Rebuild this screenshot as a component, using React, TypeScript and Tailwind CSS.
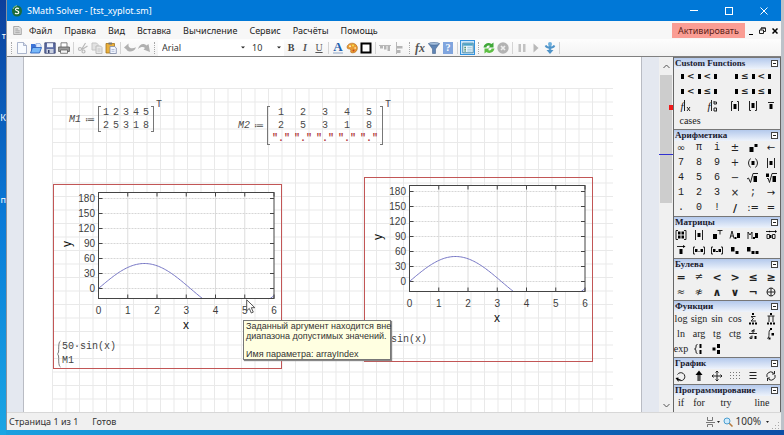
import React from 'react';

const menus = ['Файл', 'Правка', 'Вид', 'Вставка', 'Вычисление', 'Сервис', 'Расчёты', 'Помощь'];

/* ---------- toolbar ---------- */

const Svg = ({ children, size = 12 }: { children: React.ReactNode; size?: number }) => (
  <svg width={size} height={size} viewBox="0 0 12 12" fill="none" aria-hidden="true">
    {children}
  </svg>
);

const ToolButton = ({ title, children }: { title: string; children: React.ReactNode }) => (
  <button title={title} aria-label={title} className="flex h-4 w-[14px] shrink-0 items-center justify-center">
    {children}
  </button>
);

const Separator = () => <div className="mx-[2px] h-3 w-px shrink-0 bg-[#d4d4d4]" />;

const Grip = () => <div className="mx-[3px] h-3 w-px shrink-0 border-l border-dotted border-[#a8a8a8]" />;

const icons = {
  app: (
    <Svg>
      <ellipse cx="6" cy="6" rx="5" ry="5.6" fill="#1d6b3a" />
      <path d="M2 4a5 5 0 0 1 4-3.4" stroke="#8cc79f" />
      <path d="M7.8 3.8C7 2.8 4.400 3 4.500 4.500c.1 1.600 3.300 1 3.300 2.800 0 1.700-2.700 1.900-3.700.7" stroke="#fff" strokeWidth="1.200" />
    </Svg>
  ),
  sheet: (
    <Svg size={9}>
      <path d="M1 .5h7l3 3v8H1z" fill="#e4e4e4" stroke="#8a8a8a" />
      <path d="M3 4h4M3 6.500h6M3 9h6" stroke="#8a8a8a" />
    </Svg>
  ),
  create: (
    <Svg>
      <path d="M1.500.5h6l3 3v8h-9z" fill="#f8fbff" stroke="#98a4c0" strokeWidth=".8" />
      <path d="M7.500.5v3h3" fill="#d5dcec" stroke="#98a4c0" strokeWidth=".8" />
    </Svg>
  ),
  open: (
    <Svg>
      <path d="M1 2h4l1 1h4v7H1z" fill="#3c74d8" />
      <path d="M6 1.500h4l1 2v3H6z" fill="#dce9ff" stroke="#7d9ad0" strokeWidth=".6" />
      <path d="M.5 11 2.500 5.500h9L9.500 11z" fill="#78b8f8" stroke="#2458b8" strokeWidth=".8" />
    </Svg>
  ),
  save: (
    <Svg>
      <path d="M.8.8h10.400v10.400H.8z" fill="#5f6fa6" stroke="#36406c" strokeWidth=".8" />
      <path d="M3 1.200h6v4H3z" fill="#eef2fb" />
      <path d="M2.500 7h7v4h-7z" fill="#c8cfdf" />
      <path d="M4 8h1.500v3H4z" fill="#36406c" />
    </Svg>
  ),
  print: (
    <Svg>
      <path d="M3 5V.8h6V5" fill="#fff" stroke="#666" strokeWidth=".8" />
      <path d="M.6 5h10.800v4.500H.6z" fill="#9b9b9b" stroke="#555" strokeWidth=".8" />
      <path d="M2.500 8h7v3.300h-7z" fill="#f4f4f4" stroke="#555" strokeWidth=".7" />
    </Svg>
  ),
  cut: (
    <Svg>
      <path d="M8.500 1 4.500 7.500M10.500 4 5 7.500" stroke="#b9b9b9" strokeWidth="1.200" />
      <circle cx="3" cy="7" r="1.500" stroke="#b9b9b9" strokeWidth="1.200" />
      <circle cx="6.500" cy="9.500" r="1.500" stroke="#b9b9b9" strokeWidth="1.200" />
    </Svg>
  ),
  copy: (
    <Svg>
      <path d="M1 1h4.500l1.500 1.500V8H1z" fill="#e2e2e2" stroke="#c4c4c4" />
      <path d="M5 4h4.500L11 5.500v6H5z" fill="#e9e9e9" stroke="#bdbdbd" />
      <path d="M6.500 7h3M6.500 9h3" stroke="#c4c4c4" />
    </Svg>
  ),
  paste: (
    <Svg>
      <path d="M1 1.500h8.500v9.500H1z" fill="#eab03c" stroke="#a4731c" strokeWidth=".8" />
      <path d="M3.500.5h3.500v2H3.500z" fill="#777" />
      <path d="M5 4.500h4.500L11.300 6v5.500H5z" fill="#f2f6ff" stroke="#7f8cab" strokeWidth=".8" />
      <path d="M6.500 7.500h3M6.500 9.300h3" stroke="#9aa8c8" strokeWidth=".7" />
    </Svg>
  ),
  undo: (
    <Svg>
      <path d="M0 5.500 4.500 1.500v2.500c1 2.500 4 3 7.500 1.300-1.500 5-8 5.500-9.500 2.200z" fill="#b0b0b0" />
    </Svg>
  ),
  redo: (
    <Svg>
      <path d="M0 7C1.500 1.500 6 .8 8.500 3.500L10.500 2l1.500 8-6.500-2.500L7 6C5.500 4.500 3 4.500 0 7z" fill="#b0b0b0" />
    </Svg>
  ),
  palette: (
    <Svg>
      <path d="M1 5C1.500 2 5 .5 8 1.500c3 1 4 4 3 6.500s-4 3.500-6 2.500c-1.200-.7.5-2-.5-3S1 7.500 1 5z" fill="#e99a34" stroke="#b06a18" strokeWidth=".6" />
      <circle cx="4" cy="4.300" r="1" fill="#fff3c4" />
      <circle cx="7" cy="3.600" r="1" fill="#f5e04a" />
      <circle cx="9.200" cy="6" r="1" fill="#fbd98e" />
      <circle cx="7.500" cy="8.500" r="1" fill="#c5461e" />
    </Svg>
  ),
  frame: (
    <Svg>
      <path d="M1.500 1.500h9v9h-9z" stroke="#000" strokeWidth="2" fill="#fff" />
    </Svg>
  ),
  alignTop: (
    <Svg>
      <path d="M0 3.500h12" stroke="#b8b8b8" />
      <path d="M1 4h3v2.500H1zM5 4h2.500v3.500H5zM8.500 4h2.500v5H8.500z" fill="#b5b5b5" />
    </Svg>
  ),
  alignLeft: (
    <Svg>
      <path d="M3.500 0v12" stroke="#b8b8b8" />
      <path d="M4 4h5.500v2.500H4zM4 8h3.500v3H4z" fill="#b5b5b5" />
    </Svg>
  ),
  filter: (
    <Svg>
      <path d="M.5 1.500h11L7.500 7v4.500h-3V7z" fill="#5f84b4" stroke="#45658f" strokeWidth=".6" />
      <ellipse cx="6" cy="1.800" rx="5.300" ry="1.300" fill="#a9c4e2" stroke="#45658f" strokeWidth=".6" />
    </Svg>
  ),
  debug: (
    <Svg>
      <path d="M6 3v6" stroke="#5a9fd2" strokeWidth="2.500" />
      <circle cx="6" cy="2" r="2" fill="#6fb0dd" />
      <path d="M1.500 3.500C3 6.500 9 6.500 10.500 3.500" stroke="#4f93c8" strokeWidth="1.800" />
      <path d="M2.500 8h7L6 12z" fill="#4f93c8" />
    </Svg>
  ),
  panel: (
    <Svg>
      <path d="M.8 1.200h10.400v9.600H.8z" fill="#eef7fd" stroke="#3c7f9e" strokeWidth=".9" />
      <path d="M1.200 1.500h9.600v2.200H1.200z" fill="#4ba3c7" />
      <path d="M2.300 5.300h1.700M2.300 7.200h1.700M2.300 9h1.700" stroke="#2f7a52" />
      <path d="M5.300 5.300h4.500M5.300 7.200h4.500M5.300 9h4.500" stroke="#86b9d0" strokeWidth=".8" />
    </Svg>
  ),
  refresh: (
    <Svg>
      <path d="M.5 5.500C1 1.500 5.500 0 8.500 2L10.500.5V5.500H5.500L7 4C5 3 3.500 4 3.500 5.500z" fill="#3fa838" />
      <path d="M11.500 6.500c-.5 4-5 5.500-8 3.500L1.500 11.500V6.500h5L5 8c2 1 3.500 0 3.500-1.500z" fill="#5dbf43" />
    </Svg>
  ),
  stop: (
    <Svg>
      <circle cx="6" cy="6" r="5.700" fill="#b3b3b3" />
      <path d="m4 4 4 4M8 4 4 8" stroke="#ededed" strokeWidth="1.700" />
    </Svg>
  ),
  pause: (
    <Svg>
      <path d="M2.500 2H5v8H2.500zM7 2h2.500v8H7z" fill="#c2c2c2" />
    </Svg>
  ),
  play: (
    <Svg>
      <path d="m3.500 1.500 5 4.500-5 4.500z" fill="#b8b8b8" />
    </Svg>
  ),
};

const Toolbar = () => (
  <div className="flex h-[17px] items-center bg-gradient-to-b from-[#fdfdfd] to-[#f3f3f3] pl-[1px]">
    <Grip />
    <ToolButton title="Создать">{icons.create}</ToolButton>
    <ToolButton title="Открыть">{icons.open}</ToolButton>
    <ToolButton title="Сохранить">{icons.save}</ToolButton>
    <ToolButton title="Печать">{icons.print}</ToolButton>
    <Separator />
    <ToolButton title="Вырезать">{icons.cut}</ToolButton>
    <ToolButton title="Копировать">{icons.copy}</ToolButton>
    <ToolButton title="Вставить">{icons.paste}</ToolButton>
    <Separator />
    <ToolButton title="Отменить">{icons.undo}</ToolButton>
    <ToolButton title="Повторить">{icons.redo}</ToolButton>
    <Grip />
    <Combo label="Шрифт" value="Arial" className="w-[90px]" />
    <Combo label="Размер" value="10" className="w-9" />
    <ToolButton title="Полужирный">
      <span className="font-[Liberation_Serif,serif] text-[10px] font-bold text-[#444]">B</span>
    </ToolButton>
    <ToolButton title="Курсив">
      <span className="font-[Liberation_Serif,serif] text-[10px] font-bold italic text-[#555]">I</span>
    </ToolButton>
    <ToolButton title="Подчёркнутый">
      <span className="font-[Liberation_Serif,serif] text-[10px] text-[#555] underline">U</span>
    </ToolButton>
    <Separator />
    <ToolButton title="Цвет текста">
      <span className="border-b-2 border-[#c3cede] font-[Liberation_Serif,serif] text-[13px] font-bold leading-[11px] text-[#2360ae]">
        A
      </span>
    </ToolButton>
    <ToolButton title="Цвет фона">{icons.palette}</ToolButton>
    <ToolButton title="Граница">{icons.frame}</ToolButton>
    <Separator />
    <ToolButton title="По верхнему краю">{icons.alignTop}</ToolButton>
    <ToolButton title="По левому краю">{icons.alignLeft}</ToolButton>
    <Grip />
    <ToolButton title="Функция">
      <span className="font-[Liberation_Serif,serif] text-[12px] font-bold italic leading-none text-[#555]">fx</span>
    </ToolButton>
    <ToolButton title="Единицы">{icons.filter}</ToolButton>
    <ToolButton title="Справочник">
      <span className="flex h-3 w-[10px] items-center justify-center bg-[#80a5de] font-[Liberation_Serif,serif] text-[10px] font-bold text-white">
        ?
      </span>
    </ToolButton>
    <Separator />
    <button
      title="Боковая панель"
      aria-label="Боковая панель"
      className="flex h-[15px] w-[15px] shrink-0 items-center justify-center border border-[#3393df] bg-[#cce6fa]"
    >
      {icons.panel}
    </button>
    <Grip />
    <ToolButton title="Пересчитать">{icons.refresh}</ToolButton>
    <ToolButton title="Прервать">{icons.stop}</ToolButton>
    <Separator />
    <ToolButton title="Пауза">{icons.pause}</ToolButton>
    <ToolButton title="Продолжить">{icons.play}</ToolButton>
    <ToolButton title="Отладка">{icons.debug}</ToolButton>
    <Separator />
  </div>
);

const Combo = ({ label, value, className }: { label: string; value: string; className: string }) => (
  <div className={`flex h-4 shrink-0 items-center bg-white pr-[3px] ${className}`}>
    <select
      aria-label={label}
      defaultValue={value}
      className="h-4 min-w-0 flex-1 appearance-none bg-transparent pl-1 text-[9px] leading-[14px] text-[#333] outline-none"
    >
      <option>{value}</option>
    </select>
    <svg width="4" height="3" viewBox="0 0 4 3" aria-hidden="true">
      <path d="M0 .5h4L2 2.500z" fill="#222" />
    </svg>
  </div>
);

/* ---------- worksheet ---------- */

const STEP_X = 29.25;
const STEP_Y = 15;
const LEFT = 44.5;
const RIGHT = 220;
const TOP = 7.5;
const BOTTOM = 113.5;
const ZERO = 103.5;

const curve = Array.from({ length: 121 }, (_, i) => {
  const x = i / 20;
  const y = ZERO - (50 * Math.sin(x) * STEP_Y) / 30;
  return `${i ? 'L' : 'M'}${(LEFT + x * STEP_X).toFixed(2)} ${y.toFixed(2)}`;
}).join('');

const Plot = ({ id }: { id: string }) => (
  <svg width="227" height="150" viewBox="0 0 227 150" className="block font-[Liberation_Sans,sans-serif]">
    <clipPath id={id}>
      <rect x={LEFT} y={TOP} width={RIGHT - LEFT} height={BOTTOM - TOP} />
    </clipPath>
    <rect x={LEFT} y={TOP} width={RIGHT - LEFT} height={BOTTOM - TOP} fill="#fff" />
    {[1, 2, 3, 4, 5].map((n) => (
      <line key={n} x1={LEFT + n * STEP_X} x2={LEFT + n * STEP_X} y1={TOP} y2={BOTTOM} stroke="#dcdcdc" />
    ))}
    {[0, 1, 2, 3, 4, 5, 6].map((n) => (
      <g key={n}>
        <line x1={LEFT} x2={RIGHT} y1={ZERO - n * STEP_Y} y2={ZERO - n * STEP_Y} stroke="#d6d6d6" strokeDasharray="2 1" />
        <path
          d={`M${LEFT} ${ZERO - n * STEP_Y}h4M${RIGHT - 4} ${ZERO - n * STEP_Y}h4`}
          stroke="#444"
        />
        <path d={`M${LEFT + n * STEP_X} ${TOP}v4M${LEFT + n * STEP_X} ${BOTTOM - 4}v4`} stroke="#444" />
        <text x={41} y={ZERO - n * STEP_Y + 3} textAnchor="end" fontSize="10" fill="#3c3c3c">
          {n * 30}
        </text>
        <text x={LEFT + n * STEP_X} y={129} textAnchor="middle" fontSize="10" fill="#3c3c3c">
          {n}
        </text>
      </g>
    ))}
    <path d={curve} clipPath={`url(#${id})`} stroke="#7676c4" fill="none" />
    <rect x={LEFT} y={TOP} width={RIGHT - LEFT} height={BOTTOM - TOP} fill="none" stroke="#444" />
    <text x={132} y={144} textAnchor="middle" fontSize="12" fill="#111">
      x
    </text>
    <text transform="translate(17 59) rotate(-90)" textAnchor="middle" fontSize="12" fill="#111">
      y
    </text>
  </svg>
);

const PlotRegion = ({ id, className }: { id: string; className: string }) => (
  <div className={`absolute w-[229px] border border-[#c25656] ${className}`}>
    <Plot id={id} />
    <div className="mt-[5px] flex items-center gap-px pl-[3px] font-[Liberation_Mono,monospace] text-[10px] leading-[14px] text-[#444]">
      <svg width="4" height="28" viewBox="0 0 4 28" fill="none" stroke="#777" aria-hidden="true">
        <path d="M3.500 1C1 2 2 10 1.500 12 1 14 .5 14 .5 14s.5 0 1 2C2 18 1 26 3.500 27" />
      </svg>
      <div>
        <div>50·sin(x)</div>
        <div>M1</div>
      </div>
    </div>
  </div>
);

const Matrix = ({ name, rows, className, cell }: { name: string; rows: string[][]; className: string; cell: string }) => (
  <div className={`absolute flex items-center font-[Liberation_Mono,monospace] text-[10px] text-[#4a4a4a] ${className}`}>
    <span className="italic">{name}</span>
    <span className="ml-1 mr-[3px] font-[DejaVu_Sans,sans-serif]">≔</span>
    <div className="w-[3px] self-stretch border-y border-l border-[#777]" />
    <div className="grid grid-cols-5">
      {rows.flat().map((value, i) => (
        <span
          key={i}
          className={`text-center leading-[13px] ${cell} ${value === '"."' ? 'font-bold text-[#b03c3c]' : ''}`}
        >
          {value}
        </span>
      ))}
    </div>
    <div className="w-[3px] self-stretch border-y border-r border-[#777]" />
    <sup className="top-0 -mt-[6px] ml-[2px] self-start text-[10px] leading-none">T</sup>
  </div>
);

const Worksheet = () => (
  <main className="flex min-w-0 flex-1 bg-[#e4e8f0] pl-4 pr-[17px]">
    <div className="relative min-w-0 flex-1 overflow-hidden border-x border-[#b9bcc4] bg-white pl-7 pr-7 pt-[31px]">
      <svg width="100%" height="100%" className="block" aria-hidden="true">
        <defs>
          <pattern id="paper" width="27" height="27" patternUnits="userSpaceOnUse">
            <path d="M.5 0v27M14 0v27M0 .5h27M0 14h27" stroke="#e9e9e9" fill="none" />
          </pattern>
        </defs>
        <rect width="100%" height="100%" fill="url(#paper)" />
      </svg>

      <Matrix
        name="M1"
        rows={[
          ['1', '2', '3', '4', '5'],
          ['2', '5', '3', '1', '8'],
        ]}
        cell="w-[10px]"
        className="left-[45px] top-[49px]"
      />
      <Matrix
        name="M2"
        rows={[
          ['1', '2', '3', '4', '5'],
          ['2', '5', '3', '1', '8'],
          ['"."', '"."', '"."', '"."', '"."'],
        ]}
        cell="w-[22px]"
        className="left-[214px] top-[49px]"
      />

      <PlotRegion id="plot-a" className="left-[29px] top-[127px]" />
      <PlotRegion id="plot-b" className="left-[340px] top-[120px]" />

      <div
        role="tooltip"
        className="absolute left-[219px] top-[263px] w-[148px] whitespace-nowrap border border-[#777] bg-[#ffffe1] px-[2px] font-[Liberation_Sans,sans-serif] text-[9px] leading-[10px] text-[#333] shadow-[1px_1px_1px_#888]"
      >
        <p>Заданный аргумент находится вне</p>
        <p>диапазона допустимых значений.</p>
        <p className="mt-2">Имя параметра: arrayIndex</p>
      </div>
      <svg width="10" height="15" viewBox="0 0 10 15" className="absolute left-[222px] top-[242px]" aria-hidden="true">
        <path d="M.7.8v11l2.600-2.400 2 4.600 2-.9-2-4.400h3.500z" fill="#fff" stroke="#444" strokeWidth=".9" />
      </svg>
    </div>
  </main>
);

const Scroller = () => (
  <div className="flex w-[14px] shrink-0 flex-col bg-[#f0f0f0]">
    <button aria-label="Вверх" className="flex h-[18px] items-center justify-center">
      <svg width="7" height="5" viewBox="0 0 7 5" fill="none" stroke="#555">
        <path d="M.5 4 3.500 1l3 3" />
      </svg>
    </button>
    <div className="relative flex-1">
      <div className="mx-px h-32 bg-[#cdcdcd]" />
      <div className="absolute right-0 top-[30px] h-[5px] w-1 bg-[#f01818]" />
      <div className="absolute inset-x-0 top-[79px] h-px bg-[#3030d0]" />
    </div>
    <button aria-label="Вниз" className="flex h-[14px] items-center justify-center">
      <svg width="7" height="5" viewBox="0 0 7 5" fill="none" stroke="#555">
        <path d="m.5 1 3 3 3-3" />
      </svg>
    </button>
  </div>
);

/* ---------- side panels ---------- */

type Item = { name: string; view?: React.ReactNode; span?: string };

const Slot = () => <span className="inline-block h-[5px] w-[3px] shrink-0 bg-black" />;

const Range = ({ a, b }: { a: string; b: string }) => (
  <span className="flex items-center gap-[3px] font-[DejaVu_Sans,sans-serif] text-[9px] font-bold">
    <Slot />
    {a}
    <Slot />
    {b}
    <Slot />
  </span>
);

const Mono = ({ children }: { children: React.ReactNode }) => (
  <span className="font-[Liberation_Mono,monospace] text-[10px]">{children}</span>
);

const Sym = ({ children }: { children: React.ReactNode }) => (
  <span className="font-[DejaVu_Sans,sans-serif] text-[10px]">{children}</span>
);

const BoldSym = ({ children }: { children: React.ReactNode }) => (
  <span className="font-[DejaVu_Sans,sans-serif] text-[11px] font-bold">{children}</span>
);

// small operator drawing: strokes plus filled slots
const Op = ({ line, fill, w = 12 }: { line?: string; fill?: string; w?: number }) => (
  <svg width={w} height="12" viewBox={`0 0 ${w} 12`} fill="none" aria-hidden="true">
    {line && <path d={line} stroke="#222" />}
    {fill && <path d={fill} fill="#000" />}
  </svg>
);

const mono = (s: string): Item => ({ name: s, view: <Mono>{s}</Mono> });
const sym = (s: string): Item => ({ name: s, view: <Sym>{s}</Sym> });
const bold = (s: string): Item => ({ name: s, view: <BoldSym>{s}</BoldSym> });

const panels: { title: string; items: Item[] }[] = [
  {
    title: 'Custom Functions',
    items: [
      { name: 'a<x<b', view: <Range a="<" b="<" />, span: 'col-span-6' },
      { name: 'a≤x<b', view: <Range a="≤" b="<" />, span: 'col-span-6' },
      { name: 'a<x≤b', view: <Range a="<" b="≤" />, span: 'col-span-6' },
      { name: 'a≤x≤b', view: <Range a="≤" b="≤" />, span: 'col-span-6' },
      {
        name: 'f|x',
        view: (
          <span className="flex items-end text-[11px] italic">
            f<Op w={7} line="M.5 0v11M3 7l3 4M6 7l-3 4" />
          </span>
        ),
        span: 'col-span-3',
      },
      {
        name: 'f|ab',
        view: (
          <span className="flex items-end text-[11px] italic">
            f<Op w={7} line="M.5 0v11M3 1v3h2.500v-2H3M5.500 11V8H3v3h3" />
          </span>
        ),
        span: 'col-span-3',
      },
      { name: 'ceil', view: <Op line="M4 1.500H2.500V11M8 1.500h1.500V11" fill="M4.500 4h3v5h-3z" /> },
      { name: 'floor', view: <Op line="M4 10.500H2.500V1M8 10.500h1.500V1" fill="M4.500 3h3v5h-3z" /> },
      { name: 'mean', view: <Op line="M3 2.500h6" fill="M4.500 4h3v5h-3z" /> },
      { name: 'cases', span: 'col-span-4' },
    ],
  },
  {
    title: 'Арифметика',
    items: [
      sym('∞'), mono('π'), mono('i'), sym('±'),
      { name: 'x^y', view: <Op fill="M2.500 5h4v5h-4zM7.500 2h3v3h-3z" /> },
      sym('←'),
      mono('7'), mono('8'), mono('9'), sym('+'),
      { name: '(x)', view: <Op line="M3.500 1.500q-4 4.500 0 9M8.500 1.500q4 4.500 0 9" fill="M4.500 4h3v4h-3z" /> },
      { name: '|x|', view: <Op line="M2.500 1v10M9.500 1v10" fill="M4.500 4h3v4h-3z" /> },
      mono('4'), mono('5'), mono('6'), sym('−'),
      { name: 'sqrt', view: <Op line="M0 7l1.500-1 2 4.500L6 1.500h5" fill="M6.500 4h3.500v6H6.500z" /> },
      { name: 'root', view: <Op line="M2 7l1-1 1.500 4.500L7 1.500h5" fill="M7.500 4H11v6H7.500zM1 1.500h3v3.500H1z" /> },
      mono('1'), mono('2'), mono('3'), sym('×'), mono(';'), sym('→'),
      mono('.'), mono('0'), mono('!'), bold('/'), sym(':='), sym('='),
    ],
  },
  {
    title: 'Матрицы',
    items: [
      { name: 'matrix', view: <Op line="M3 1.500H1V10.500H3M9 1.500h2v9H9" fill="M3 2.500h2.500V5.500H3zM6.500 2.500H9V5.500H6.500zM3 6.500h2.500V9.500H3zM6.500 6.500H9V9.500H6.500z" /> },
      { name: 'det', view: <Op line="M2.500 1v10M9.500 1v10" fill="M4.500 4h3v4h-3z" /> },
      { name: 'transpose', view: <Op line="M6.500 1.500h5M9 1.500v4" fill="M2 5h4v5H2z" /> },
      { name: 'minor', view: <Op line="M1 9.500 3 2l2 7.500M1.500 7h3" fill="M5.500 8h2v2h-2zM8 4h3v5H8z" /> },
      { name: 'algebraic', view: <Op line="M1 10V3l2 3 2-3v7" fill="M6 8h2v2H6zM8 4h3v5H8z" /> },
      { name: 'cross', view: <Op line="M1 2.500h10M2 5.500h2.500v4H2zM7.500 5.500H10v4H7.500z" fill="M5 6h1.500v3H5zM4 1.500l1.500 1L4 3.500zM10 1l2 1.500L10 4z" /> },
      { name: 'vectorize', view: <Op line="M2 2.500h7" fill="M8 1l2.500 1.500L8 4zM4.500 5h3v5h-3z" /> },
      { name: '[x..y]', view: <Op line="M2 3H.5v7H2M10 3h1.500v7H10" fill="M2 5h2.500v3H2zM7.500 5H10v3H7.500zM5.500 7h1v1h-1z" /> },
      { name: '[x..y)', view: <Op line="M2 3H.5v7H2M10 3h1.500v7H10" fill="M2 5h2.500v3H2zM7.500 5H10v3H7.500zM5 7h2v1H5z" /> },
      { name: 'element', view: <Op fill="M2 3h3.500v4.500H2zM6.500 7h3v3h-3z" /> },
      { name: 'element 2', view: <Op fill="M0 3h3.500v4.500H0zM4.500 7h3v3h-3zM8.500 7h3v3h-3z" /> },
    ],
  },
  {
    title: 'Булева',
    items: [
      bold('='), sym('≠'), bold('<'), bold('>'), bold('≤'), bold('≥'),
      sym('≈'), sym('≉'), bold('∧'), bold('∨'), bold('¬'),
      { name: 'xor', view: <Op line="M6 2a4 4 0 1 0 .01 0M6 2v8M2 6h8" /> },
    ],
  },
  {
    title: 'Функции',
    items: [
      { name: 'log' }, { name: 'sign' }, { name: 'sin' }, { name: 'cos' },
      { name: 'sum', view: <Op line="M8.500 3.500H4L6.500 5.500 4 8h5" fill="M5 0h2v2H5zM2 9.500h2v2H2zM5 9.500h2v2H5zM8 9.500h2v2H8z" /> },
      { name: 'product', view: <Op line="M2.500 3h7M4 3v6M8 3v6" fill="M5 0h2v2H5zM2 9.500h2v2H2zM5 9.500h2v2H5zM8 9.500h2v2H8z" /> },
      { name: 'ln' }, { name: 'arg' }, { name: 'tg' }, { name: 'ctg' },
      { name: 'd/dx', view: <Op line="M2 5.500h8M7 1v3H5V2.500h2M5 7.500v3H3V9h2" fill="M7.500 8h2v3h-2z" /> },
      { name: 'integral', view: <Op line="M6 2C4.500 1 4 3 4 6s-.5 5-2 4" fill="M5 0h2v2H5zM6.500 5H9v2.500H6.500zM3.500 9.500h2v2h-2z" /> },
      { name: 'exp' },
      { name: 'system', view: <Op line="M4.500 1.500Q2.500 1.500 3 4 3 6 1.500 6 3 6 3 8q-.5 2.500 1.500 2.500" fill="M6.500 1H8.500v4H6.500zM6.500 7H8.500v4H6.500z" /> },
      { name: 'line', view: <Op fill="M1.500 4.500h3v3h-3zM6 1h3v4H6zM6 7h3v4H6z" /> },
    ],
  },
  {
    title: 'График',
    items: [
      { name: 'rotate', view: <Op line="M3 9.500A4 4 0 1 0 2.500 4.500M5.500 9.500H2" fill="M.5 8l3-.5V12z" /> },
      { name: 'scale', view: <Op line="M6 4v7M5 4v7M7 4v7" fill="M6 .5 9.500 5h-7z" /> },
      { name: 'move', view: <Op line="M6 1v10M1 6h10M4.500 2.500 6 1l1.500 1.500M4.500 9.500 6 11l1.500-1.500M2.500 4.500 1 6l1.500 1.500M9.500 4.500 11 6 9.500 7.500" /> },
      {
        name: 'points',
        view: (
          <svg width="10" height="8" viewBox="0 0 10 8" stroke="#777" strokeDasharray="1 2" aria-hidden="true">
            <path d="M0 .5h10M0 3.500h10M0 6.500h10" />
          </svg>
        ),
      },
      { name: 'lines', view: <Op line="M2.500 2.500h7M2.500 5.500h7M2.500 8.500h7" /> },
      { name: 'refresh', view: <Op line="M2 7A4 4 0 0 1 8 2.500L9.500 4M10 5A4 4 0 0 1 4 9.500L2.500 8M9.500 1v3H7M2.500 11V8H5" /> },
    ],
  },
  {
    title: 'Программирование',
    items: [
      { name: 'if' }, { name: 'for' },
      { name: 'try', span: 'col-span-4' },
      { name: 'line', span: 'col-span-4' },
    ],
  },
];

const SidePanels = () => (
  <aside className="w-[108px] shrink-0 border-x border-[#666] bg-[#f0f0f0] font-[Liberation_Serif,serif]">
    {panels.map((panel) => (
      <section key={panel.title}>
        <h2 className="flex h-3 items-center justify-between border-t border-[#777] bg-gradient-to-b from-[#b4c9ec] to-[#eef3fb] pl-px pr-[2px] text-[9px] font-bold leading-none text-[#1a1a2e]">
          {panel.title}
          <button
            aria-label={`Свернуть ${panel.title}`}
            className="flex h-[7px] w-[7px] items-center justify-center border border-[#444] bg-white"
          >
            <span className="h-px w-[3px] bg-[#222]" />
          </button>
        </h2>
        <div className="-ml-[2px] grid grid-cols-12">
          {panel.items.map((item) => (
            <button
              key={item.name}
              aria-label={item.name}
              className={`flex h-[15px] min-w-0 items-center justify-center whitespace-nowrap pb-px text-[10px] leading-none text-[#222] ${item.span ?? 'col-span-2'}`}
            >
              {item.view ?? item.name}
            </button>
          ))}
        </div>
      </section>
    ))}
  </aside>
);

/* ---------- window ---------- */

const TitleBar = () => (
  <header className="flex h-[21px] items-center bg-[#0078d7] pl-1 text-white">
    {icons.app}
    <h1 className="ml-1 flex-1 text-[9px]">SMath Solver - [tst_xyplot.sm]</h1>
    <button aria-label="Свернуть" className="flex h-full w-[35px] items-center justify-center">
      <span className="h-px w-2 bg-white" />
    </button>
    <button aria-label="Развернуть" className="flex h-full w-[35px] items-center justify-center">
      <span className="h-2 w-2 border border-white" />
    </button>
    <button aria-label="Закрыть" className="flex h-full w-[35px] items-center justify-center">
      <svg width="8" height="8" viewBox="0 0 8 8" stroke="#fff">
        <path d="m.5.5 7 7M7.500.5l-7 7" />
      </svg>
    </button>
  </header>
);

const MenuBar = () => (
  <nav className="flex h-[18px] items-center bg-[#f7f7f7] pl-[6px] pt-px text-[#222]">
    {icons.sheet}
    <div className="ml-[7px] flex flex-1 gap-3 text-[9px]">
      {menus.map((menu) => (
        <button key={menu}>{menu}</button>
      ))}
    </div>
    <button className="h-[15px] w-[73px] bg-[#fa9d94] text-[9px] text-[#5a1d18]">Активировать</button>
    <div className="flex w-9 items-center justify-between pl-1 pr-[3px]">
      <button aria-label="Свернуть документ" className="flex h-2 w-1 items-end">
        <span className="h-px w-1 bg-black" />
      </button>
      <button aria-label="Восстановить документ">
        <svg width="7" height="7" viewBox="0 0 7 7" fill="none" stroke="#222">
          <path d="M.5 3h4v3.500h-4zM2 3V1h4.500v3.500h-2M2 1h4.500" />
        </svg>
      </button>
      <button aria-label="Закрыть документ">
        <svg width="6" height="6" viewBox="0 0 6 6" stroke="#000" strokeWidth="1.500">
          <path d="m.5.5 5 5M5.500.5l-5 5" />
        </svg>
      </button>
    </div>
  </nav>
);

const StatusBar = () => (
  <footer className="flex h-[18px] items-center border-t border-[#d7d7d7] bg-[#f0f0f0] pl-[2px] text-[9px] text-[#333]">
    <span>Страница 1 из 1</span>
    <span className="ml-[14px] flex-1">Готов</span>
    <button aria-label="Вид страницы" className="flex items-center gap-[2px]">
      <svg width="9" height="10" viewBox="0 0 9 10" fill="none" stroke="#777">
        <path d="M1.500 0v3.500h5V0M0 5.500h9M1.500 10V7.500h5V10" />
      </svg>
      <svg width="3" height="2" viewBox="0 0 3 2">
        <path d="M0 0h3L1.500 2z" fill="#222" />
      </svg>
    </button>
    <button className="ml-[3px] flex items-center text-[10px]">
      <svg width="10" height="10" viewBox="0 0 10 10" fill="none" className="mr-[3px]" aria-hidden="true">
        <path d="m6 6 3.500 3.500" stroke="#b5793c" strokeWidth="1.500" />
        <circle cx="4" cy="4" r="3" fill="#cfeafb" stroke="#4c9fd0" />
      </svg>
      100%
      <svg width="3" height="2" viewBox="0 0 3 2" className="ml-[5px]">
        <path d="M0 0h3L1.500 2z" fill="#222" />
      </svg>
    </button>
    <svg width="8" height="8" viewBox="0 0 8 8" fill="#aaa" className="ml-[3px] mr-px self-end" aria-hidden="true">
      <path d="M6 0h1v1H6zM3 3h1v1H3zM6 3h1v1H6zM0 6h1v1H0zM3 6h1v1H3zM6 6h1v1H6z" />
    </svg>
  </footer>
);

const App: React.FC = () => {
  return (
    <div className="flex min-h-screen bg-gradient-to-r from-[#1ba0e0] to-[#0d4ea6] font-[Noto_Sans,sans-serif]">
      <div className="flex w-[6px] shrink-0 flex-col items-end overflow-hidden bg-gradient-to-b from-[#0c3f9c] via-[#0a7ad8] to-[#1ba6e4] pt-[30px] text-[9px] leading-3 text-white">
        <span>т</span>
        <span className="mt-[70px]">К</span>
        <span className="mt-[70px]">п</span>
      </div>
      <div className="mb-[5px] flex min-w-0 flex-1 flex-col border-l border-[#8a93a0]">
        <TitleBar />
        <MenuBar />
        <Toolbar />
        <div className="flex flex-1 border-t border-[#808080]">
          <Worksheet />
          <Scroller />
          <SidePanels />
        </div>
        <StatusBar />
      </div>
      <div className="mb-[5px] w-[3px] shrink-0 bg-[#bcc2c9]" />
    </div>
  );
};

export default App;
